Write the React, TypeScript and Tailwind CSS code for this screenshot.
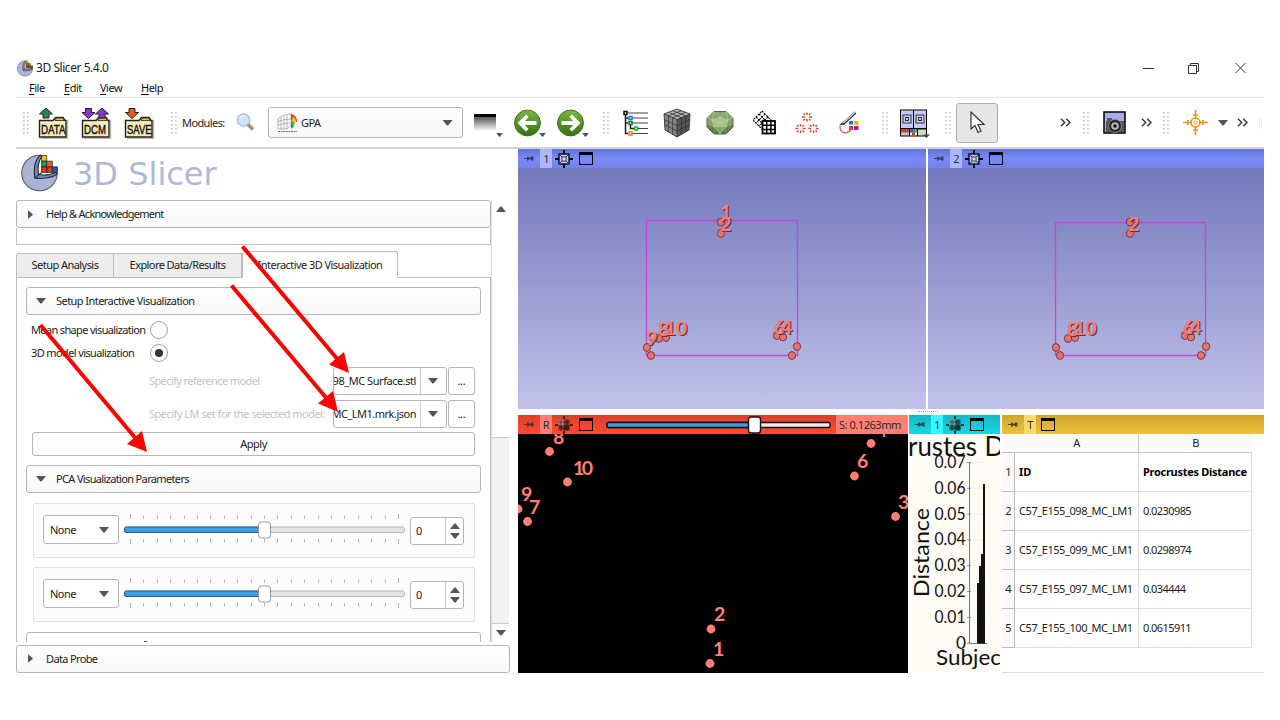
import type { ReactNode } from 'react';

const Down = ({ className = 'w-[10px] h-[6px]' }: { className?: string }) => (
  <svg viewBox="0 0 10 6" className={`shrink-0 ${className}`}><path d="M0 0H10L5.6 5.6H4.4Z" fill="#555" /></svg>
);
const Up = ({ className = 'w-[10px] h-[6px]' }: { className?: string }) => (
  <svg viewBox="0 0 10 6" className={`shrink-0 ${className}`}><path d="M0 6H10L5.6 .4H4.4Z" fill="#555" /></svg>
);
const Right = () => (
  <svg viewBox="0 0 6 10" className="w-[5px] h-[9px] shrink-0"><path d="M0 0L5.6 4.4V5.6L0 10Z" fill="#555" /></svg>
);

const Grip = () => (
  <svg className="w-[6px] h-[22px]" viewBox="0 0 6 22">
    {[0, 1, 2, 3, 4, 5].map((i) => (
      <g key={i} fill="#c4c4c4"><rect x="0" y={i * 4} width="1.6" height="1.6" /><rect x="4" y={i * 4} width="1.6" height="1.6" /></g>
    ))}
  </svg>
);

const Slot = ({ w, children }: { w: string; children?: ReactNode }) => (
  <div className={`${w} h-full shrink-0 flex items-center`}>{children}</div>
);

const Chevrons = () => (
  <svg className="w-[11px] h-[9px]" viewBox="0 0 11 9"><path d="M1 .8L4.6 4.5L1 8.2M6.3 .8L9.9 4.5L6.3 8.2" fill="none" stroke="#3c3c3c" strokeWidth="1.5" /></svg>
);

const ArrowUpDown = ({ x, up, fill }: { x: number; up: boolean; fill: string }) => (
  <path d={up ? `M${x} 1L${x + 6.5} 7H${x + 3}V11H${x - 3}V7H${x - 6.5}Z` : `M${x} 11.5L${x + 6.5} 5.5H${x + 3}V1.5H${x - 3}V5.5H${x - 6.5}Z`} fill={fill} stroke="#222" strokeWidth="1" />
);

const Folder = ({ label, kind }: { label: string; kind: 'data' | 'dcm' | 'save' }) => (
  <svg className="w-[31px] h-[32px] overflow-visible" viewBox="0 0 31 32">
    <path d="M3 31.3H29.5V13" fill="none" stroke="#bbb" strokeWidth="1.5" />
    <path d="M1.5 30V13.5H15L17.5 10.5H25L27 13.5H28V30Z" fill="#f7ecb8" stroke="#222" strokeWidth="1.4" />
    <path d="M17 13.5L18.5 11H24.5L26.5 13.5Z" fill="#dcc162" stroke="#222" strokeWidth=".8" />
    {kind === 'data' && <ArrowUpDown x={8} up fill="#268453" />}
    {kind === 'dcm' && <><ArrowUpDown x={7.5} up={false} fill="#8538c8" /><ArrowUpDown x={21} up fill="#8538c8" /></>}
    {kind === 'save' && <ArrowUpDown x={8} up={false} fill="#ee5a1e" />}
    <text x="3" y="26.500" fontSize="12" textLength={kind === 'dcm' ? 22 : 24.500} lengthAdjust="spacingAndGlyphs" fontFamily="Liberation Sans" letterSpacing="0" fill="#111" stroke="#111" strokeWidth=".4">{label}</text>
  </svg>
);

const Logo = ({ className }: { className: string }) => (
  <svg viewBox="0 0 36 37" className={className}>
    <circle cx="18" cy="18.500" r="17.300" fill="#aab4d4" stroke="#4d556e" strokeWidth="1" />
    <path d="M19 .5L36 .5V19L35 19Q34 23 13.500 23.500Q12 7 19 1Z" fill="#fff" />
    <path d="M19 1.200C12.500 6 12.500 16 13.500 23.500C22 24.500 31 23 35.200 19.500L34.500 17.500C30 20 23 21 17 20C16 13 16.500 7 20.500 2Z" fill="#7c87ab" stroke="#222a3c" strokeWidth="1.100" />
    <path d="M13.500 23.500L20 18" stroke="#222a3c" strokeWidth="1" />
    <path d="M20 1.500h5v5.500h-5z" fill="#f4c21b" stroke="#222" strokeWidth=".7" />
    <path d="M20 7h5v5.500h-5z" fill="#169b62" stroke="#222" strokeWidth=".7" />
    <path d="M25 7h5.500v5.500h-5.500z" fill="#e8641b" stroke="#222" strokeWidth=".7" />
    <path d="M20 12.500h5v5.500h-5zM25 12.500h5.500v5.500h-5.500z" fill="#e3341f" stroke="#222" strokeWidth=".7" />
    <path d="M30.500 12.500h5v5.500h-5z" fill="#2459ac" stroke="#222" strokeWidth=".7" />
  </svg>
);

const Nav = ({ back }: { back: boolean }) => (
  <svg className="w-[27px] h-[28px] shrink-0" viewBox="0 0 27 28">
    <defs><linearGradient id={back ? 'nb' : 'nf'} x1="0" y1="0" x2="0" y2="1"><stop offset="0" stopColor="#7cb843" /><stop offset="1" stopColor="#35700f" /></linearGradient></defs>
    <circle cx="13.500" cy="14" r="12.900" fill={back ? 'url(#nb)' : 'url(#nf)'} stroke="#34701a" />
    <path transform={back ? undefined : 'translate(27 0) scale(-1 1)'} d="M3.500 14L12 5.500L14.500 8L10.800 11.900H22.500V16.100H10.800L14.500 20L12 22.500Z" fill="#fff" />
  </svg>
);

const SmallArrow = () => <div className="h-full flex items-start pt-[35px]"><Down className="w-[7px] h-[4px]" /></div>;

const Tree = () => (
  <svg className="w-[25px] h-[26px]" viewBox="0 0 25 26" fill="none">
    <path d="M5 3H25M8 8H25M8 13H25M13 18.500H25M8 23.500H25" stroke="#444" strokeWidth="1.200" />
    <path d="M2.500 3V23.500H5M2.500 8H5M2.500 13H5M7.500 13V18.500H11" stroke="#222" strokeWidth="1.500" />
    <rect x="1" y="1.500" width="3" height="3" stroke="#000" strokeWidth="1.500" fill="#fff" />
    <rect x="6" y="6.500" width="3" height="3" stroke="#1671e0" strokeWidth="1.500" fill="#fff" />
    <rect x="6" y="11.500" width="3" height="3" stroke="#087a1d" strokeWidth="1.500" fill="#fff" />
    <rect x="11.500" y="17" width="3" height="3" stroke="#12c722" strokeWidth="1.500" fill="#fff" />
    <rect x="6" y="22" width="3" height="3" stroke="#ee8015" strokeWidth="1.500" fill="#fff" />
  </svg>
);

const Cube = () => (
  <svg className="w-[28px] h-[30px]" viewBox="0 0 28 30">
    <path d="M14 1L27 6L14 11.500L1 6Z" fill="#b4b4b4" /><path d="M1 6L14 11.500V29L2 22Z" fill="#858585" /><path d="M27 6L14 11.500V29L26 22Z" fill="#555" />
    <path d="M5.300 4.300L18.300 9.700M9.600 2.700L22.600 7.800M22.700 4.300L9.700 9.700M18.400 2.700L5.400 7.800M5.400 8V24M9.700 9.700V26.500M18.300 9.700V26.500M22.600 7.800V24M1.200 11.500L14 17.500L26.800 11.500M1.600 16.800L14 23L26.400 16.800" stroke="#333" strokeWidth=".8" fill="none" />
    <path d="M14 1L27 6L26 22L14 29L2 22L1 6ZM1 6L14 11.500L27 6M14 11.500V29" fill="none" stroke="#333" strokeWidth=".9" />
  </svg>
);

const Model = () => (
  <svg className="w-[28px] h-[24px]" viewBox="0 0 28 24">
    <path d="M8 .5H20L27 7V16L20 23H8L1 16V7Z" fill="#86a56b" stroke="#4d6839" />
    <path d="M8 .5L14 6L20 .5M14 6L6 9L1 7L8 .5L6 9L8 16L1 16M14 6L22 9L27 7L20 .5L22 9L20 16H27M8 16L14 12L20 16L14 23L8 16V23M20 16V23M6 9L14 12L22 9M14 6V12" fill="none" stroke="#b4cc98" strokeWidth=".7" />
    <path d="M6 9L14 6L22 9L20 16H8Z" fill="#c3dba6" opacity=".5" />
    <path d="M1 14L8 16L14 23L20 16L27 14V16L20 23H8L1 16Z" fill="#345020" opacity=".45" />
  </svg>
);

const Transforms = () => (
  <svg className="w-[24px] h-[25px]" viewBox="0 0 24 25" fill="none" stroke="#000">
    <path d="M9 1L18 10L9 19L0 10ZM6 4L15 13M3 7L12 16M12 4L3 13M15 7L6 16" strokeWidth="1.100" strokeDasharray="2 1" />
    <rect x="9.500" y="11" width="12.500" height="12.500" fill="#fff" strokeWidth="1.800" /><path d="M13.700 11V23.500M17.900 11V23.500M9.500 15.200H22M9.500 19.400H22" strokeWidth="1.500" />
  </svg>
);

const Stars = () => (
  <svg className="w-[24px] h-[22px]" viewBox="0 0 24 22" stroke="#e03a20" strokeWidth="1.400">
    {[[12, 5], [5.500, 16.500], [18.500, 16.500]].map(([x, y]) => (
      <path key={x} d={`M${x} ${y - 4.5}v2.5M${x} ${y + 4.5}v-2.5M${x - 5} ${y}h2.800M${x + 5} ${y}h-2.800M${x - 3.5} ${y - 3.5}l1.500 1.500M${x + 3.5} ${y - 3.5}l-1.500 1.500M${x - 3.5} ${y + 3.5}l1.500 -1.500M${x + 3.5} ${y + 3.5}l-1.500 -1.500`} />
    ))}
  </svg>
);

const Brush = () => (
  <svg className="w-[22px] h-[24px]" viewBox="0 0 22 24" fill="none">
    <path d="M10 10h4v3.500h-4z" fill="#1670ee" /><path d="M15 10h4.500v4h-4.500z" fill="#ffb70d" /><path d="M10 15h4v4h-4z" fill="#e9362a" /><path d="M15 15h4.500v4h-4.500z" fill="#b511cf" />
    <path d="M1 15C1 23 8 24 12.500 18" stroke="#e95b67" strokeWidth="1.300" />
    <path d="M4 13L16.500 1.500" stroke="#222" strokeWidth="2.600" /><path d="M4.500 12L16.500 1" stroke="#ddd" strokeWidth="1.200" /><path d="M0 14.500L3 11.500L5 13.500Z" fill="#333" />
  </svg>
);

const LayoutIcon = () => (
  <svg className="w-[31px] h-[30px]" viewBox="0 0 31 30">
    <rect x="1" y="1.500" width="27" height="27" fill="#000" />
    <path d="M2 2.500h12v17.500H2zM15 2.500h12v17.500H15z" fill="#c5caf3" />
    <g fill="none" stroke="#333" strokeWidth="1"><rect x="4" y="7" width="8" height="8" /><rect x="6.500" y="9.500" width="3" height="3" /><rect x="17" y="7" width="8" height="8" /><rect x="19.500" y="9.500" width="3" height="3" /></g>
    <path d="M2 21.500h8v6H2z" fill="#c7c7c7" /><path d="M2 21.500h8v3H2z" fill="#db3f31" /><path d="M11 21.500h7v6h-7z" fill="#fff" /><path d="M11 21.500h3v3h-3z" fill="#2c51df" /><path d="M14 21.500h4v3h-4z" fill="#29b637" /><path d="M13 24.500h3v3h-3z" fill="#ef2820" /><path d="M19 21.500h8v6h-8z" fill="#d7d7cd" /><path d="M24 26.500h7l-3.500 3.500z" fill="#444" />
  </svg>
);

const Camera = () => (
  <svg className="w-[23px] h-[23px]" viewBox="0 0 23 23">
    <rect x="1" y="1" width="21" height="21" fill="#a4aceb" stroke="#000" strokeWidth="1.500" />
    <path d="M4 7h5v3H4zM3 10h18v11H3z" fill="#555" /><circle cx="12" cy="15" r="6.500" fill="#222" stroke="#888" /><circle cx="12" cy="15" r="3.800" fill="#bbb" /><circle cx="12" cy="15" r="1.800" fill="#111" />
  </svg>
);

const Crosshair = () => (
  <svg className="w-[26px] h-[26px]" viewBox="0 0 26 26" fill="none" stroke="#ef9418">
    <path d="M12.500 0V9M12.500 16V25M0 12.500H9M16 12.500H25" strokeWidth="1.700" /><circle cx="12.500" cy="12.500" r="4.500" strokeWidth="1.600" /><circle cx="12.500" cy="12.500" r="1.500" />
    <path d="M10 5h5M10 20h5M5 10v5M20 10v5" strokeWidth="1.700" />
  </svg>
);

const GpaIcon = () => (
  <svg className="w-[21px] h-[20px]" viewBox="0 0 21 20">
    <path d="M1 6Q5 1.500 14 1V12L10 16H1ZM1 8.500Q7 6 14 6M1 12Q7 10 13.500 10M4 4V16M7 3V16M10 2V16" fill="#fff" stroke="#999" strokeWidth=".7" />
    <path d="M14 0.500C18 2 20.500 5 20 9L14 7Z" fill="#e74625" /><path d="M16 3.500L19 7L18 12L14.500 9Z" fill="#f0bf25" /><path d="M14 7L17 10L16.500 14L14 15Z" fill="#3fa64d" /><path d="M14 12.500L16.500 13L14 16Z" fill="#235bb3" />
    <path d="M1 18.500H20" stroke="#777" strokeDasharray="2 .6" />
  </svg>
);

const Magnifier = () => (
  <svg className="w-[19px] h-[19px]" viewBox="0 0 19 19"><path d="M12 11.500L16 15.500" stroke="#c08a52" strokeWidth="3.500" strokeLinecap="round" /><circle cx="7.500" cy="7" r="6.200" fill="#cfe4f8" stroke="#9fbde0" strokeWidth="1.300" /><path d="M4 6A4 4 0 0 1 8.500 3" stroke="#fff" fill="none" /></svg>
);

const Toolbar = () => (
  <div className="h-[52px] flex items-center border-t border-[#e2e2e2] border-b-2 border-b-[#d2d2d2] overflow-hidden">
    <Slot w="w-[7px]" /><Slot w="w-[15px]"><Grip /></Slot>
    <Slot w="w-[43px]"><Folder label="DATA" kind="data" /></Slot>
    <Slot w="w-[43px]"><Folder label="DCM" kind="dcm" /></Slot>
    <Slot w="w-[47px]"><Folder label="SAVE" kind="save" /></Slot>
    <Slot w="w-[11px]"><Grip /></Slot>
    <Slot w="w-[54px]"><span className="tracking-[-0.600px]">Modules:</span></Slot>
    <Slot w="w-[32px]"><Magnifier /></Slot>
    <Slot w="w-[206px]">
      <div className="w-[195px] h-[31px] flex items-center rounded-[3px] border border-[#b4b4b4] bg-gradient-to-b from-white to-[#f6f6f6] pl-[8px] pr-[9px]">
        <GpaIcon /><span className="ml-[3px] flex-1 tracking-[-0.600px]">GPA</span><Down className="w-[11px] h-[6px]" />
      </div>
    </Slot>
    <Slot w="w-[22px]"><div className="w-[22px] h-[17px] bg-gradient-to-b from-[#555] via-[#aaa] to-white border-t-3 border-black" /></Slot>
    <Slot w="w-[18px]"><SmallArrow /></Slot>
    <Slot w="w-[25px]"><Nav back /></Slot>
    <Slot w="w-[18px]"><SmallArrow /></Slot>
    <Slot w="w-[25px]"><Nav back={false} /></Slot>
    <Slot w="w-[21px]"><SmallArrow /></Slot>
    <Slot w="w-[20px]"><Grip /></Slot>
    <Slot w="w-[40px]"><Tree /></Slot>
    <Slot w="w-[43px]"><Cube /></Slot>
    <Slot w="w-[47px]"><Model /></Slot>
    <Slot w="w-[42px]"><Transforms /></Slot>
    <Slot w="w-[44px]"><Stars /></Slot>
    <Slot w="w-[43px]"><Brush /></Slot>
    <Slot w="w-[17px]"><Grip /></Slot>
    <Slot w="w-[46px]"><LayoutIcon /></Slot>
    <Slot w="w-[11px]"><Grip /></Slot>
    <Slot w="w-[104px]">
      <div className="w-[42px] h-[40px] rounded-[3px] border border-[#b0b0b0] bg-[#e6e6e6] flex items-center justify-center">
        <svg className="w-[17px] h-[24px]" viewBox="0 0 17 24"><path d="M2 1V18L6 14.500L9 21.500L12 20L9 13.500H15Z" fill="#fff" stroke="#333" strokeWidth="1.200" /></svg>
      </div>
    </Slot>
    <Slot w="w-[23px]"><Chevrons /></Slot>
    <Slot w="w-[20px]"><Grip /></Slot>
    <Slot w="w-[38px]"><Camera /></Slot>
    <Slot w="w-[22px]"><Chevrons /></Slot>
    <Slot w="w-[20px]"><Grip /></Slot>
    <Slot w="w-[35px]"><Crosshair /></Slot>
    <Slot w="w-[19px]"><Down /></Slot>
    <Slot w="w-[22px]"><Chevrons /></Slot>
    <Slot w="w-[3px]"><Grip /></Slot>
  </div>
);

const Section = ({ label, open, className = '' }: { label: string; open: boolean; className?: string }) => (
  <div className={`h-[28px] shrink-0 flex items-center rounded-[3px] border-[1.500px] border-[#b6b6b6] bg-gradient-to-b from-white to-[#f8f8f8] ${className}`}>
    <span className={open ? 'w-[29px] pl-[9px] flex' : 'w-[29px] pl-[11px] flex'}>{open ? <Down /> : <Right />}</span>
    <span>{label}</span>
  </div>
);

const Radio = ({ label, on, className }: { label: string; on?: boolean; className: string }) => (
  <div className="h-[23.500px] pl-[14px] flex items-center">
    <span className={`w-[119px] ${className}`}>{label}</span>
    <span className="w-[18px] h-[18px] rounded-full border border-[#a0a0a0] bg-white flex items-center justify-center">
      {on && <span className="w-[8px] h-[8px] rounded-full bg-[#333]" />}
    </span>
  </div>
);

const PathRow = ({ label, value, className, valueClass }: { label: string; value: string; className: string; valueClass: string }) => (
  <div className="h-[28px] flex items-center pl-[132px]">
    <span className={`w-[184px] text-[#c3c3c3] ${className}`}>{label}</span>
    <div className="w-[114px] h-[28px] flex rounded-[3px] border-[1.500px] border-[#b6b6b6] overflow-hidden bg-white">
      <span className={`w-[87px] flex justify-end items-center pr-[4px] overflow-hidden border-r border-[#ccc] ${valueClass}`}>{value}</span>
      <span className="flex-1 flex items-center justify-center pr-[2px]"><Down /></span>
    </div>
    <div className="ml-[1px] w-[27px] h-[28px] rounded-[3px] border-[1.500px] border-[#b6b6b6] flex items-center justify-center bg-[#fdfdfd] tracking-[-0.200px]">...</div>
  </div>
);

const PcRow = () => (
  <div className="ml-[16px] mr-[15px] h-[55px] shrink-0 rounded-[2px] border border-[#e2e2e2] bg-[#fcfcfc] flex items-center pl-[9px]">
    <div className="w-[76px] h-[29px] -mt-[2px] flex items-center justify-between rounded-[3px] border-[1.500px] border-[#b6b6b6] bg-white pl-[6px] pr-[9px]"><span className="tracking-[-0.550px]">None</span><Down /></div>
    <svg className="w-[281px] h-[36px] ml-[5px] -mt-[3px] shrink-0" viewBox="0 0 281 36">
      {Array.from({ length: 21 }, (_, i) => (
        <path key={i} d={`M${6.500 + Math.round(i * 13.400)} ${i % 20 ? 4.500 : 3}V8M${6.500 + Math.round(i * 13.400)} 28V${i % 20 ? 31.500 : 33}`} stroke="#b4b4b4" />
      ))}
      <rect x=".5" y="16" width="280" height="5.500" rx="2" fill="#e3e3e3" stroke="#b5b5b5" />
      <rect x=".5" y="16" width="140" height="5.500" rx="2" fill="#3c9ee2" stroke="#235f8c" />
      <rect x="134.500" y="11" width="12" height="16" rx="3" fill="#fff" stroke="#999" />
    </svg>
    <div className="ml-[5px] w-[54px] h-[28px] flex rounded-[3px] border-[1.500px] border-[#b6b6b6] bg-white">
      <span className="w-[35px] pl-[5px] flex items-center border-r border-[#c4c4c4]">0</span>
      <span className="flex-1 flex flex-col items-center justify-center gap-[4px]"><Up /><Down /></span>
    </div>
  </div>
);

const LeftPanel = () => (
  <div className="w-[495px] shrink-0 flex flex-col whitespace-nowrap">
    <div className="h-[50px] flex items-center">
      <Logo className="ml-[5px] w-[37px] h-[38px] -mt-[4px]" />
      <span className="ml-[15px] -mt-[2px] text-[32px] leading-none tracking-[0px] text-[#afb8d8] font-['DejaVu_Sans',sans-serif]">3D Slicer</span>
    </div>
    <div className="h-[442px] flex">
      <div className="w-[475px] overflow-hidden flex flex-col">
        <Section label="Help & Acknowledgement" open={false} className="tracking-[-0.740px]" />
        <div className="h-[17px] shrink-0 border-x border-b border-[#c2c2c2]" />
        <div className="h-[31.500px] shrink-0 flex items-end">
          <div className="w-[98px] h-[24px] flex items-center justify-center rounded-tl-[3px] border border-b-0 border-[#bcbcbc] bg-[#ededed] tracking-[-0.550px]">Setup Analysis</div>
          <div className="w-[128px] h-[24px] flex items-center justify-center border border-b-0 border-l-0 border-[#bcbcbc] bg-[#ededed] tracking-[-0.570px]">Explore Data/Results</div>
          <div className="-mb-[1px] w-[156px] h-[27px] flex items-center justify-center rounded-t-[3px] border border-b-0 border-[#bcbcbc] bg-white tracking-[-0.550px] relative">Interactive 3D Visualization</div>
        </div>
        <div className="flex-1 border-x border-t border-[#bcbcbc] flex flex-col pt-[9.500px]">
          <Section label="Setup Interactive Visualization" open className="mx-[9px]" />
          <div className="pt-[3px]"><Radio label="Mean shape visualization" className="tracking-[-0.650px]" /><Radio label="3D model visualization" on className="tracking-[-0.620px]" /></div>
          <div className="mt-[2px] shrink-0 flex flex-col gap-[5px]">
            <PathRow label="Specify reference model" value="C57_E155_098_MC Surface.stl" className="tracking-[-0.600px]" valueClass="tracking-[-0.450px]" />
            <PathRow label="Specify LM set for the selected model:" value="MC_LM1.mrk.json" className="tracking-[-0.510px]" valueClass="tracking-[-0.500px]" />
          </div>
          <div className="mx-[15px] mt-[4px] h-[24px] shrink-0 flex items-center justify-center rounded-[3px] border-[1.500px] border-[#b6b6b6] bg-[#fdfdfd] tracking-[-0.500px]">Apply</div>
          <Section label="PCA Visualization Parameters" open className="mx-[9px] mt-[9px] mb-[10px] tracking-[-0.650px]" />
          <PcRow /><div className="h-[9px] shrink-0" /><PcRow />
          <div className="mt-[9.500px] mx-[9px] h-[29px] shrink-0 rounded-[3px] border-[1.500px] border-[#b6b6b6] pt-[8px] pl-[117px]"><div className="w-[3px] h-[1px] bg-[#555]" /></div>
        </div>
      </div>
      <div className="w-[18px] flex flex-col border-l border-[#ddd]">
        <div className="h-[17px] flex items-center justify-center"><Up /></div>
        <div className="h-[220px]" />
        <div className="h-[187px] border-y border-[#c8c8c8] bg-[#f2f2f2]" />
        <div className="h-[18px] flex items-center justify-center"><Down /></div>
      </div>
    </div>
    <Section label="Data Probe" open={false} className="mt-[2.500px] w-[494px] tracking-[-0.640px]" />
  </div>
);

const Pin = () => (
  <svg className="w-[11px] h-[7px] shrink-0" viewBox="0 0 11 7"><path d="M1 3H4V4H1ZM4 1.500Q5.500 1 6 2.500H8V1.500H10.500V5.500H8V4.500H6Q5.500 6 4 5.500Z" fill="#33303c" opacity=".85" /></svg>
);
const Center = ({ slice }: { slice?: boolean }) => slice ? (
  <svg className="w-[18px] h-[18px]" viewBox="0 0 18 18"><path d="M9 0V3M9 15V18M0 9H3M15 9H18" stroke="#111" strokeWidth="1.500" /><path d="M3.500 3.500H14.500V14.500H3.500Z" fill="#222" opacity=".55" /><path d="M3.500 3.500H9V9H3.500Z" fill="#fff" opacity=".35" /><path d="M9 9H14.500V14.500H9Z" fill="#000" opacity=".4" /><path d="M3.500 6H14.500M6 3.500V14.500M12 3.500V14.500M3.500 12H14.500" stroke="#111" strokeWidth=".5" /></svg>
) : (
  <svg className="w-[18px] h-[18px]" viewBox="0 0 18 18"><path d="M9 0V4M9 14V18M0 9H4M14 9H18" stroke="#000" strokeWidth="1.800" /><rect x="4" y="4" width="10" height="10" fill="#b8c0ff" stroke="#000" strokeWidth="1.300" /><rect x="7" y="7" width="4" height="4" fill="#d8dcff" stroke="#222" strokeWidth=".8" /><path d="M4 4L7 7M14 4L11 7M4 14L7 11M14 14L11 11" stroke="#222" strokeWidth=".8" /></svg>
);
const Max = () => <div className="w-[14px] h-[13px] shrink-0 border border-t-[3px] border-black" />;

const ViewHeader = ({ label, bg, tag, center, children }: { label: string; bg: string; tag: string; center?: 'view' | 'slice'; children?: ReactNode }) => (
  <div className={`h-[19px] shrink-0 flex items-center pl-[5px] text-[#2a2a35] ${bg}`}>
    <Pin /><span className={`ml-[6px] w-[12px] h-full shrink-0 flex items-center justify-center ${tag}`}>{label}</span>
    {center ? <span className="ml-[3px] mr-[6px] flex shrink-0"><Center slice={center === 'slice'} /></span> : <span className="w-[5px] shrink-0" />}
    <Max />{children}
  </div>
);

const blue = 'bg-gradient-to-b from-[#6274d8] via-[#7a8af6] to-[#7382ec]';

type Mark = { x: number; y: number; t?: string; tx?: number; ty?: number };
const View3D = ({ w, box, marks }: { w: string; box: string; marks: Mark[] }) => (
  <svg className={`${w} h-[241px] shrink-0 bg-gradient-to-b from-[#7478bb] to-[#c2c2e9]`}>
    <path d={box} fill="none" stroke="#c545dd" strokeWidth="1.300" />
    {marks.map((m, i) => <ellipse key={i} cx={m.x} cy={m.y} rx="3.600" ry="3.900" fill="#ee7067" stroke="#703a4c" strokeWidth="1" />)}
    <g fontFamily="Lato" fontWeight="700" fontSize="19.500">
      {marks.filter((m) => m.t).map((m, i) => (
        <g key={i} letterSpacing="0"><text x={m.tx! + 1.200} y={m.ty! + 1} fill="#533a4b">{m.t}</text><text x={m.tx} y={m.ty} fill="#ff7d70">{m.t}</text></g>
      ))}
    </g>
  </svg>
);

const marks1: Mark[] = [
  { x: 203, y: 54, t: '1', tx: 202, ty: 51 }, { x: 203, y: 65.500, t: '2', tx: 202, ty: 63 },
  { x: 129, y: 179.500, t: '9', tx: 128, ty: 177 }, { x: 141, y: 170.500, t: '8', tx: 140, ty: 167.500 }, { x: 148, y: 169.500, t: '10', tx: 146.500, ty: 167 },
  { x: 133, y: 187.500 }, { x: 259, y: 167.500, t: '6', tx: 256, ty: 165.500 }, { x: 265, y: 169, t: '4', tx: 263, ty: 166 }, { x: 279, y: 178.500 }, { x: 274, y: 187.500 },
];
const marks2: Mark[] = [
  { x: 202, y: 54 }, { x: 202, y: 65.500, t: '2', tx: 200, ty: 63 }, { x: 140, y: 170.500, t: '8', tx: 139, ty: 167.500 }, { x: 147, y: 169.500, t: '10', tx: 146, ty: 167 },
  { x: 128, y: 179.500 }, { x: 132, y: 187.500 }, { x: 257, y: 167.500, t: '6', tx: 255, ty: 165.500 }, { x: 263, y: 169, t: '4', tx: 262, ty: 166 }, { x: 278, y: 178.500 }, { x: 273, y: 187.500 },
];

const SliceView = () => (
  <svg className="w-[390px] h-[239px] bg-black" fill="#ff7f72">
    {[[31.500, 17.500], [49.500, 48], [0, 75], [9.500, 87.500], [353, 9.500], [336.500, 42], [377.500, 82.500], [193, 195], [192, 229.500]].map(([x, y]) => <circle key={x} cx={x} cy={y} r="4.400" />)}
    <g fontFamily="Lato" fontWeight="700" fontSize="19.500" letterSpacing="0">
      <text x="35" y="10">8</text><text x="55" y="41" textLength="20">10</text><text x="3" y="67">9</text><text x="11" y="80">7</text>
      <text x="358" y="3">4</text><text x="339" y="34">6</text><text x="380" y="75">3</text><text x="196" y="187">2</text><text x="195" y="222">1</text>
    </g>
  </svg>
);

const Plot = () => (
  <svg className="w-[91px] h-[239px] bg-[#fffcf5]" fontFamily="Lato" fill="#111" letterSpacing="0">
    <text x="-1" y="22" fontSize="27" textLength="69" lengthAdjust="spacingAndGlyphs">rustes</text><text x="75.500" y="22" fontSize="26">D</text>
    {['0.07', '0.06', '0.05', '0.04', '0.03', '0.02', '0.01', '0'].map((t, i) => (
      <g key={t}>
        <text x={i === 7 ? 47 : 25.500} y={34 + i * 25.800} fontSize="17.500" textLength={i === 7 ? 10 : 31} lengthAdjust="spacingAndGlyphs">{t}</text>
        <path d={`M58 ${28.500 + i * 25.800}h4`} stroke="#777" strokeWidth=".8" /><path d={`M64 ${28.500 + i * 25.800}h14`} stroke="#f0eee8" strokeWidth=".8" />
      </g>
    ))}
    <path d="M60.500 28V209.500H78" fill="none" stroke="#777" />
    <path d="M68 209.500V149H70V132H72V120H74V50H76V209.500Z" />
    <text transform="translate(20 163) rotate(-90)" fontSize="21" textLength="89" lengthAdjust="spacingAndGlyphs">Distance</text>
    <text x="27" y="231" fontSize="21.500" textLength="73" lengthAdjust="spacingAndGlyphs">Subject</text>
  </svg>
);

const rows = [
  ['1', 'ID', 'Procrustes Distance'],
  ['2', 'C57_E155_098_MC_LM1', '0.0230985'],
  ['3', 'C57_E155_099_MC_LM1', '0.0298974'],
  ['4', 'C57_E155_097_MC_LM1', '0.034444'],
  ['5', 'C57_E155_100_MC_LM1', '0.0615911'],
];

const Table = () => (
  <div className="flex-1 border-b border-[#ddd] text-[#1c1c1c]">
    <div className="grid grid-cols-[13px_124px_113px] h-[19px] bg-[#fafafa] w-[250px]">
      <span className="border-b border-[#bbb]" /><span className="border-r border-b border-[#c8c8c8] flex items-center justify-center">A</span><span className="border-b border-[#c8c8c8] flex items-center justify-center">B</span>
    </div>
    {rows.map(([n, a, b], i) => (
      <div key={n} className="grid grid-cols-[13px_124px_113px] h-[39px] w-[250px]">
        <span className="border-r border-b border-[#bbb] bg-[#fafafa] flex items-center justify-center">{n}</span>
        <span className={`border-r border-b border-[#ddd] flex items-center pl-[4px] ${i ? 'tracking-[-0.430px]' : 'font-bold text-black tracking-[0px]'}`}>{a}</span>
        <span className={`border-r border-b border-[#ddd] flex items-center pl-[4px] whitespace-nowrap ${i ? 'tracking-[-0.580px]' : 'font-bold text-black tracking-[-0.280px]'}`}>{b}</span>
      </div>
    ))}
  </div>
);

const Views = () => (
  <div className="ml-[7px] flex-1 min-w-0 flex flex-col">
    <div className="h-[260px] flex gap-[2px]">
      <div className="w-[408px] flex flex-col"><ViewHeader label="1" bg={blue} tag="bg-[#adb6ff]" center="view" /><View3D w="w-[408px]" box="M128.500 52.500H279.500V187.500H128.500Z" marks={marks1} /></div>
      <div className="w-[336px] flex flex-col"><ViewHeader label="2" bg={blue} tag="bg-[#adb6ff]" center="view" /><View3D w="w-[336px]" box="M127.500 54.500H277.500V187.500H127.500Z" marks={marks2} /></div>
    </div>
    <div className="h-[6px] pl-[400px] pt-[2px]"><div className="w-[20px] border-t border-dotted border-[#aaa]" /></div>
    <div className="h-[258px] flex">
      <div className="w-[390px] flex flex-col">
        <ViewHeader label="R" bg="bg-gradient-to-b from-[#dc3f2a] to-[#ff4b32]" tag="bg-[#ff8070]" center="slice">
          <svg className="ml-[13px] w-[227px] h-[18px] shrink-0" viewBox="0 0 227 18">
            <rect x="1" y="6.500" width="223" height="5" rx="1.500" fill="#f1eaea" stroke="#111" strokeWidth="1.400" /><rect x="1" y="6.500" width="147" height="5" rx="1.500" fill="#3c9ee2" stroke="#111" strokeWidth="1.400" />
            <rect x="142.500" y="1" width="12" height="16" rx="2.500" fill="#fff" stroke="#111" strokeWidth="1.400" />
          </svg>
          <span className="ml-[3px] flex-1 h-full flex items-center pl-[3px] bg-[#ff8070] whitespace-nowrap tracking-[-0.450px]">S: 0.1263mm</span>
        </ViewHeader>
        <SliceView />
      </div>
      <div className="ml-[1px] w-[91px] flex flex-col"><ViewHeader label="1" bg="bg-gradient-to-b from-[#10b9c6] to-[#1cd6e2]" tag="bg-[#35f7ff]" center="slice" /><Plot /></div>
      <div className="ml-[2px] flex-1 flex flex-col"><ViewHeader label="T" bg="bg-gradient-to-b from-[#cfa62c] to-[#edc23e]" tag="bg-[#ffd966]" /><Table /></div>
    </div>
  </div>
);

export default function App() {
  return (
    <div className="relative w-[1280px] h-[720px] overflow-hidden bg-white px-[16px] pt-[58px] text-[11px] leading-[14px] tracking-[-0.550px] text-[#222] font-['Noto_Sans',sans-serif]">
      <div className="h-[20px] flex items-center">
        <Logo className="ml-[1px] w-[16px] h-[17px]" /><span className="ml-[3px] text-[12px] tracking-[-0.450px]">3D Slicer 5.4.0</span>
        <svg className="ml-auto mr-[18px] w-[104px] h-[12px]" viewBox="0 0 104 12" fill="none" stroke="#333"><path d="M1 6.500H12M93.500 1L103.500 11M103.500 1L93.500 11" /><path d="M46.500 3.500H54.500V11.500H46.500ZM48.500 3.500V1.500H56.500V9.500H54.500" /></svg>
      </div>
      <div className="h-[19px] flex items-center text-[#111]">
        {[['F', 'ile', 'w-[35px]'], ['E', 'dit', 'w-[36px]'], ['V', 'iew', 'w-[41px]'], ['H', 'elp', 'w-[40px]']].map(([u, r, w], i) => (
          <span key={u} className={`${w} tracking-[-0.500px] ${i ? '' : 'ml-[13px] shrink-0'}`}><u className="underline-offset-2">{u}</u>{r}</span>
        ))}
      </div>
      <Toolbar />
      <div className="h-[524px] flex">
        <div className="pt-[1px] flex"><LeftPanel /></div><Views />
      </div>
      <svg className="absolute left-0 top-0 z-20 w-[1280px] h-[720px] pointer-events-none" fill="#fe0000" stroke="none">
        <path d="M242.500 246.500L339 361M231.500 285.500L328 400M40.500 325L137 440" stroke="#fe0000" strokeWidth="4" />
        <path d="M349 373L329 364.500L344 352ZM338 412L318 403.500L333 391ZM147 452L127 444L142 431Z" />
      </svg>
    </div>
  );
}
